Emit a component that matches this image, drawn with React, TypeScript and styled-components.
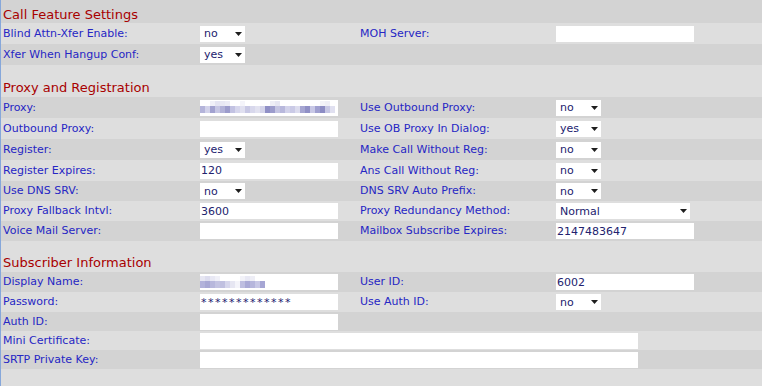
import React from "react";
import styled, { createGlobalStyle } from "styled-components";

const LIGHT = "#dedede";
const DARK = "#d3d3d3";

const GlobalStyle = createGlobalStyle`
  html, body {
    margin: 0;
    padding: 0;
    background: ${LIGHT};
  }
  body {
    font-family: "DejaVu Sans", Verdana, sans-serif;
  }
`;

const Page = styled.div`
  width: 762px;
  height: 386px;
  box-sizing: border-box;
  border-left: 1px solid #86a7da;
  background: ${LIGHT};
  display: flex;
  flex-direction: column;
  overflow: hidden;
`;

const SectionTitle = styled.div<{ $top: number; $h: number; $dark?: boolean }>`
  height: ${p => p.$h}px;
  box-sizing: border-box;
  padding: ${p => p.$top}px 0 0 2px;
  font-size: 13px;
  line-height: 16px;
  color: #a80000;
  white-space: nowrap;
  background: ${p => (p.$dark ? DARK : LIGHT)};
`;

const Row = styled.div<{ $h: number; $dark?: boolean }>`
  display: grid;
  grid-template-columns: 199px 158px 198px 1fr;
  align-items: center;
  height: ${p => p.$h}px;
  background: ${p => (p.$dark ? DARK : LIGHT)};
`;

const Label = styled.span`
  padding-left: 2px;
  font-size: 11px;
  line-height: 14px;
  color: #2626c4;
  white-space: nowrap;
`;

const Cell = styled.div<{ $span?: boolean }>`
  display: flex;
  align-items: center;
  ${p => (p.$span ? "grid-column: 2 / 5;" : "")}
`;

const TextInput = styled.input<{ $w: number; $masked?: boolean }>`
  width: ${p => p.$w}px;
  height: 16px;
  box-sizing: border-box;
  border: none;
  outline: none;
  margin: 0;
  padding: 0 1px;
  background: #fff;
  font-family: "DejaVu Sans", Verdana, sans-serif;
  font-size: 11px;
  color: #22226e;
  letter-spacing: ${p => (p.$masked ? "1.5px" : "0")};
`;

const SelectBox = styled.div<{ $w: number }>`
  width: ${p => p.$w}px;
  height: 16px;
  box-sizing: border-box;
  padding: 0 3px 0 4px;
  background: #fff;
  display: flex;
  align-items: center;
  justify-content: space-between;
  font-size: 11px;
  color: #22226e;
`;

const BlurBox = styled.div<{ $w: number }>`
  width: ${p => p.$w}px;
  height: 16px;
  background: #fff;
  display: flex;
  align-items: center;
`;

const Arrow = () => (
  <svg width="7" height="4" viewBox="0 0 7 4">
    <path d="M0 0H7L3.5 4Z" fill="#1e1e1e" />
  </svg>
);

// pixelated (blurred-out) value, drawn as a mosaic
const Mosaic = ({ top, bottom, w }: { top: string[]; bottom: string[]; w: number }) => (
  <svg width={w} height="13" viewBox={`0 0 ${w} 13`}>
    {top.map((c, i) => (
      <rect key={"t" + i} x={i * 5} y={0} width={5} height={5} fill={c} />
    ))}
    {bottom.map((c, i) => (
      <rect key={"b" + i} x={i * 5} y={5} width={5} height={7} fill={c} />
    ))}
  </svg>
);

const proxyTop = [
  "#fff", "#fff", "#f0f0f8", "#e4e4f2", "#e8e8f4", "#ececf6", "#fff", "#fff", "#f4f4fa",
  "#fff", "#fff", "#fff", "#fff", "#fff", "#eeeef6", "#e6e6f2", "#fff", "#fff", "#fff",
  "#fff", "#fff", "#fff", "#fff", "#fff", "#f2f2f8", "#eeeef6", "#fff",
];
const proxyBottom = [
  "#b4b4da", "#d2d2ea", "#a2a2d0", "#c6c6e4", "#b2b2d8", "#9c9ccc", "#c2c2e2", "#d6d6ec",
  "#e0e0f0", "#c8c8e4", "#d8d8ec", "#e2e2f0", "#d4d4ea", "#9090c6", "#9c9ccc", "#c4c4e2",
  "#b8b8dc", "#d2d2ea", "#cacae6", "#dcdcee", "#a6a6d2", "#9090c6", "#c8c8e6", "#a0a0d0",
  "#8c8cc4", "#c6c6e4", "#e0e0f0",
];
const nameTop = [
  "#e6e6f2", "#dcdcee", "#e8e8f4", "#f0f0f8", "#fff", "#fff", "#fff", "#fff", "#f2f2f8",
  "#e8e8f4", "#eeeef6", "#fff", "#fff", "#fff",
];
const nameBottom = [
  "#b2b2da", "#a8a8d4", "#b8b8dc", "#c4c4e2", "#c0c0e0", "#d6d6ec", "#e6e6f2", "#f4f4fa",
  "#bebee0", "#aaaad6", "#b6b6dc", "#c8c8e6", "#a6a6d4", "#fff",
];

type Field =
  | { kind: "text"; value?: string; w?: number; masked?: boolean }
  | { kind: "select"; value: string; w?: number }
  | { kind: "mosaic"; top: string[]; bottom: string[]; w: number };

interface RowData {
  label: string;
  field: Field;
  label2?: string;
  field2?: Field;
  h: number;
  dark?: boolean;
  wide?: boolean;
}

interface SectionData {
  title: string;
  top: number;
  h: number;
  dark?: boolean;
  rows: RowData[];
}

const sections: SectionData[] = [
  {
    title: "Call Feature Settings",
    top: 7,
    h: 23,
    dark: true,
    rows: [
      { label: "Blind Attn-Xfer Enable:", field: { kind: "select", value: "no" }, label2: "MOH Server:", field2: { kind: "text" }, h: 21 },
      { label: "Xfer When Hangup Conf:", field: { kind: "select", value: "yes" }, h: 21, dark: true },
    ],
  },
  {
    title: "Proxy and Registration",
    top: 15,
    h: 32,
    rows: [
      { label: "Proxy:", field: { kind: "mosaic", top: proxyTop, bottom: proxyBottom, w: 135 }, label2: "Use Outbound Proxy:", field2: { kind: "select", value: "no" }, h: 21, dark: true },
      { label: "Outbound Proxy:", field: { kind: "text" }, label2: "Use OB Proxy In Dialog:", field2: { kind: "select", value: "yes" }, h: 21 },
      { label: "Register:", field: { kind: "select", value: "yes" }, label2: "Make Call Without Reg:", field2: { kind: "select", value: "no" }, h: 21, dark: true },
      { label: "Register Expires:", field: { kind: "text", value: "120" }, label2: "Ans Call Without Reg:", field2: { kind: "select", value: "no" }, h: 21 },
      { label: "Use DNS SRV:", field: { kind: "select", value: "no" }, label2: "DNS SRV Auto Prefix:", field2: { kind: "select", value: "no" }, h: 20, dark: true },
      { label: "Proxy Fallback Intvl:", field: { kind: "text", value: "3600" }, label2: "Proxy Redundancy Method:", field2: { kind: "select", value: "Normal", w: 134 }, h: 20 },
      { label: "Voice Mail Server:", field: { kind: "text" }, label2: "Mailbox Subscribe Expires:", field2: { kind: "text", value: "2147483647" }, h: 20, dark: true },
    ],
  },
  {
    title: "Subscriber Information",
    top: 14,
    h: 31,
    rows: [
      { label: "Display Name:", field: { kind: "mosaic", top: nameTop, bottom: nameBottom, w: 70 }, label2: "User ID:", field2: { kind: "text", value: "6002" }, h: 20, dark: true },
      { label: "Password:", field: { kind: "text", value: "*************", masked: true }, label2: "Use Auth ID:", field2: { kind: "select", value: "no" }, h: 20 },
      { label: "Auth ID:", field: { kind: "text" }, h: 19, dark: true },
      { label: "Mini Certificate:", field: { kind: "text", w: 438 }, h: 19, wide: true },
      { label: "SRTP Private Key:", field: { kind: "text", w: 438 }, h: 19, dark: true, wide: true },
    ],
  },
];

const renderField = (f: Field) => {
  switch (f.kind) {
    case "select":
      return (
        <SelectBox $w={f.w ?? 45}>
          <span>{f.value}</span>
          <Arrow />
        </SelectBox>
      );
    case "mosaic":
      return (
        <BlurBox $w={138}>
          <Mosaic top={f.top} bottom={f.bottom} w={f.w} />
        </BlurBox>
      );
    default:
      return <TextInput $w={f.w ?? 138} $masked={f.masked} readOnly value={f.value ?? ""} />;
  }
};

const Filler = styled.div`
  flex: 1;
  background: ${LIGHT};
`;

const App = () => (
  <>
    <GlobalStyle />
    <Page>
      {sections.map(s => (
        <React.Fragment key={s.title}>
          <SectionTitle $top={s.top} $h={s.h} $dark={s.dark}>
            {s.title}
          </SectionTitle>
          {s.rows.map(r => (
            <Row key={r.label} $h={r.h} $dark={r.dark}>
              <Label>{r.label}</Label>
              <Cell $span={r.wide}>{renderField(r.field)}</Cell>
              {!r.wide && <Label>{r.label2 ?? ""}</Label>}
              {!r.wide && <Cell>{r.field2 ? renderField(r.field2) : null}</Cell>}
            </Row>
          ))}
        </React.Fragment>
      ))}
      <Filler />
    </Page>
  </>
);

export default App;
